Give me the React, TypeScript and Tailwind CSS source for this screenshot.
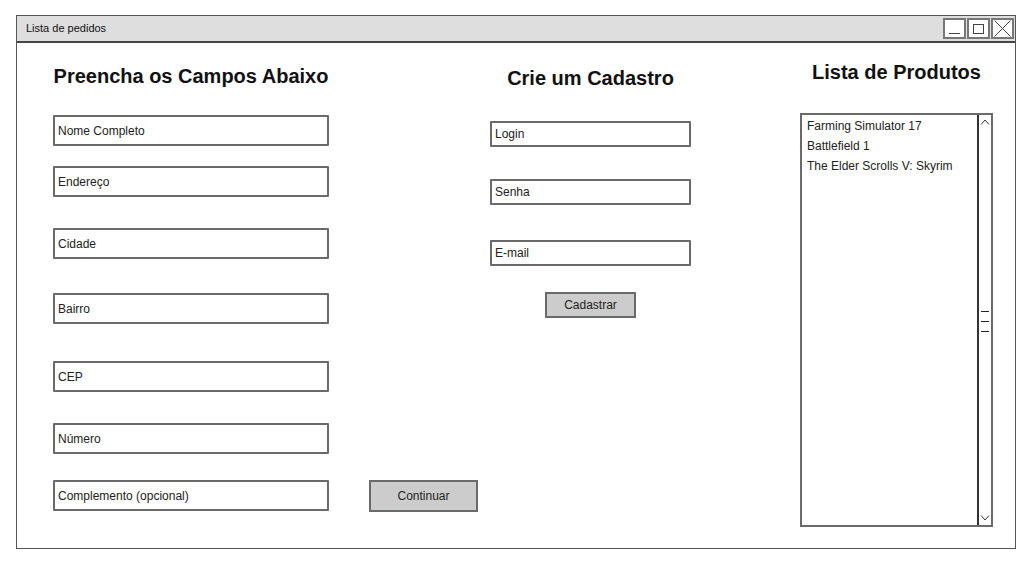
import React from "react";

const sketch = { fontFamily: '"Comic Sans MS", "Liberation Sans", Arial, sans-serif' };
const head = { fontFamily: '"Liberation Sans", Arial, sans-serif' };

function Field({ label, w, h, mt }: { label: string; w: string; h: string; mt: string }) {
  return (
    <div
      className={`${w} ${h} ${mt} flex items-center border-2 border-[#6a6a6a] rounded-[1px] bg-white px-[3px] text-[12px] text-[#222]`}
      style={sketch}
    >
      {label}
    </div>
  );
}

export default function App() {
  const left: [string, string][] = [
    ["Nome Completo", "mt-[27px]"],
    ["Endereço", "mt-[20px]"],
    ["Cidade", "mt-[31px]"],
    ["Bairro", "mt-[34px]"],
    ["CEP", "mt-[37px]"],
    ["Número", "mt-[31px]"],
  ];
  return (
    <div className="w-[1036px] h-[573px] bg-white pt-[15px] pl-[16px]">
      <div className="w-[1000px] h-[534px] border border-[#555] flex flex-col">
        <div className="h-[27px] bg-[#dedede] border-b-2 border-[#444] flex items-center justify-between pl-[9px] pr-[1px]">
          <span className="text-[11px] text-[#111]" style={sketch}>
            Lista de pedidos
          </span>
          <div className="flex gap-[1px]">
            <div className="w-[23px] h-[21px] border-2 border-[#777] bg-white flex items-end justify-center pb-[3px]">
              <div className="w-[11px] h-[1px] bg-[#444]" />
            </div>
            <div className="w-[23px] h-[21px] border-2 border-[#777] bg-white flex items-center justify-center">
              <div className="w-[11px] h-[10px] border border-[#444]" />
            </div>
            <div className="w-[23px] h-[21px] border-2 border-[#777] bg-white flex items-center justify-center">
              <svg width="17" height="17" viewBox="0 0 17 17">
                <path d="M0.5 0.5L16.5 16.5M16.5 0.5L0.5 16.5" stroke="#444" strokeWidth="1" />
              </svg>
            </div>
          </div>
        </div>
        <div className="flex flex-1">
          {/* Left column */}
          <div className="w-[473px] pl-[36px] flex flex-col">
            <h1 className="mt-[21px] w-[276px] text-center text-[20px] leading-[24px] font-bold text-[#111]" style={head}>
              Preencha os Campos Abaixo
            </h1>
            {left.map(([l, mt]) => (
              <Field key={l} label={l} w="w-[276px]" h="h-[31px]" mt={mt} />
            ))}
            <div className="flex mt-[26px] items-start">
              <Field label="Complemento (opcional)" w="w-[276px]" h="h-[31px]" mt="mt-0" />
              <div
                className="ml-[40px] w-[109px] h-[32px] border-2 border-[#6a6a6a] bg-[#cccccc] flex items-center justify-center text-[12px] text-[#222]"
                style={sketch}
              >
                Continuar
              </div>
            </div>
          </div>
          {/* Middle column */}
          <div className="w-[201px] flex flex-col items-center">
            <h1 className="mt-[23px] text-[20px] leading-[24px] font-bold text-[#111]" style={head}>
              Crie um Cadastro
            </h1>
            <Field label="Login" w="w-[201px]" h="h-[26px]" mt="mt-[31px]" />
            <Field label="Senha" w="w-[201px]" h="h-[26px]" mt="mt-[32px]" />
            <Field label="E-mail" w="w-[201px]" h="h-[26px]" mt="mt-[35px]" />
            <div
              className="mt-[26px] w-[91px] h-[26px] border-2 border-[#6a6a6a] bg-[#cccccc] flex items-center justify-center text-[12px] text-[#222]"
              style={sketch}
            >
              Cadastrar
            </div>
          </div>
          {/* Right column */}
          <div className="ml-[109px] w-[193px] flex flex-col items-center">
            <h1 className="mt-[17px] text-[20px] leading-[24px] font-bold text-[#111] whitespace-nowrap" style={head}>
              Lista de Produtos
            </h1>
            <div className="mt-[29px] w-[193px] h-[414px] border-2 border-[#6a6a6a] flex bg-white">
              <div className="flex-1 pl-[5px] pt-[1px] text-[12px] leading-[20px] text-[#222]" style={sketch}>
                <div>Farming Simulator 17</div>
                <div>Battlefield 1</div>
                <div>The Elder Scrolls V: Skyrim</div>
              </div>
              <div className="w-[14px] border-l-2 border-[#333] flex flex-col items-center justify-between py-[4px]">
                <svg width="10" height="6" viewBox="0 0 10 6">
                  <path d="M1 5.5L5 1L9 5.5" stroke="#333" strokeWidth="1" fill="none" />
                </svg>
                <div className="flex flex-col gap-[9px] mt-[2px]">
                  <div className="w-[8px] h-[1px] bg-[#222]" />
                  <div className="w-[8px] h-[1px] bg-[#222]" />
                  <div className="w-[8px] h-[1px] bg-[#222]" />
                </div>
                <svg width="10" height="6" viewBox="0 0 10 6">
                  <path d="M1 0.5L5 5L9 0.5" stroke="#333" strokeWidth="1" fill="none" />
                </svg>
              </div>
            </div>
          </div>
        </div>
      </div>
    </div>
  );
}
